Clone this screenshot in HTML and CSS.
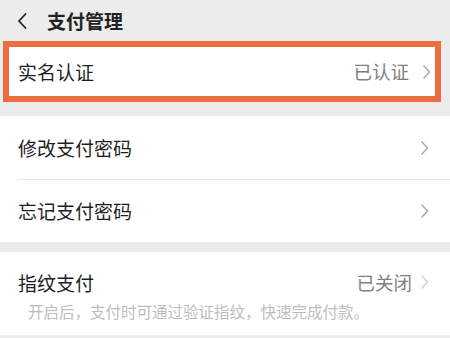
FILE: index.html
```html
<!DOCTYPE html>
<html lang="zh-CN">
<head>
<meta charset="utf-8">
<link rel="stylesheet" href="styles.css">
</head>
<body>
<div class="page">
  <header class="header">
    <svg class="back" width="10" height="16" viewBox="0 0 10 16"><path d="M8.5 1 L2 8 L8.5 15" fill="none" stroke="#222" stroke-width="1.8" stroke-linecap="round" stroke-linejoin="round"/></svg>
    <span class="title">支付管理</span>
  </header>

  <div class="hl-row">
    <span class="label">实名认证</span>
    <span class="right"><span class="value">已认证</span><svg class="chev" width="8" height="14" viewBox="0 0 8 14"><path d="M1 1 L6.5 7 L1 13" fill="none" stroke="#a8a8a8" stroke-width="1.4" stroke-linecap="round" stroke-linejoin="round"/></svg></span>
  </div>

  <section class="group g2">
    <div class="row">
      <span class="label">修改支付密码</span>
      <svg class="chev" width="8" height="14" viewBox="0 0 8 14"><path d="M1 1 L6.5 7 L1 13" fill="none" stroke="#a8a8a8" stroke-width="1.4" stroke-linecap="round" stroke-linejoin="round"/></svg>
    </div>
    <div class="divider"></div>
    <div class="row">
      <span class="label">忘记支付密码</span>
      <svg class="chev" width="8" height="14" viewBox="0 0 8 14"><path d="M1 1 L6.5 7 L1 13" fill="none" stroke="#a8a8a8" stroke-width="1.4" stroke-linecap="round" stroke-linejoin="round"/></svg>
    </div>
  </section>

  <section class="group g3">
    <div class="row-top">
      <span class="label">指纹支付</span>
      <span class="right tight"><span class="value">已关闭</span><svg class="chev light" width="8" height="14" viewBox="0 0 8 14"><path d="M1 1 L6.5 7 L1 13" fill="none" stroke="#d0d0d0" stroke-width="1.4" stroke-linecap="round" stroke-linejoin="round"/></svg></span>
    </div>
    <div class="hint">开启后，支付时可通过验证指纹，快速完成付款。</div>
  </section>
</div>
</body>
</html>
```

FILE: styles.css
```css
* { box-sizing: border-box; }
html, body {
  margin: 0;
  padding: 0;
  background: #ececec;
  font-family: "Noto Sans CJK SC", "Noto Sans", sans-serif;
  color: #2a2a2a;
}
.page {
  width: 450px;
  height: 338px;
  overflow: hidden;
  background: #ececec;
}
.header {
  height: 41px;
  display: flex;
  align-items: center;
  padding-left: 17px;
}
.back { margin-right: 20px; }
.title {
  font-size: 19px;
  font-weight: 700;
  color: #222;
  line-height: 1;
}
.hl-row {
  height: 61px;
  margin: 0 9px 0 3px;
  border: 6px solid #eb6d40;
  background: #fff;
  display: flex;
  align-items: center;
  justify-content: space-between;
  padding: 0 4px 0 9px;
}
.label {
  font-size: 19px;
  font-weight: 400;
  color: #1f1f1f;
  line-height: 1;
}
.right {
  display: flex;
  align-items: center;
  gap: 14px;
}
.right.tight { gap: 9px; }
.value {
  font-size: 18.5px;
  color: #808080;
  line-height: 1;
}
.group {
  background: #fff;
}
.g2 { margin-top: 14px; }
.g3 { margin-top: 10px; height: 83px; }
.row {
  height: 63px;
  display: flex;
  align-items: center;
  justify-content: space-between;
  padding: 0 21px 0 18px;
}
.divider {
  height: 1px;
  margin-left: 18px;
  background: #e6e6e6;
  margin-bottom: -1px;
  position: relative;
}
.row-top {
  height: 50px;
  padding: 10px 21px 0 18px;
  display: flex;
  align-items: center;
  justify-content: space-between;
}
.hint {
  padding-left: 28px;
  font-size: 15.5px;
  color: #bdbdbd;
  line-height: 1;
  margin-top: 2px;
}
```
